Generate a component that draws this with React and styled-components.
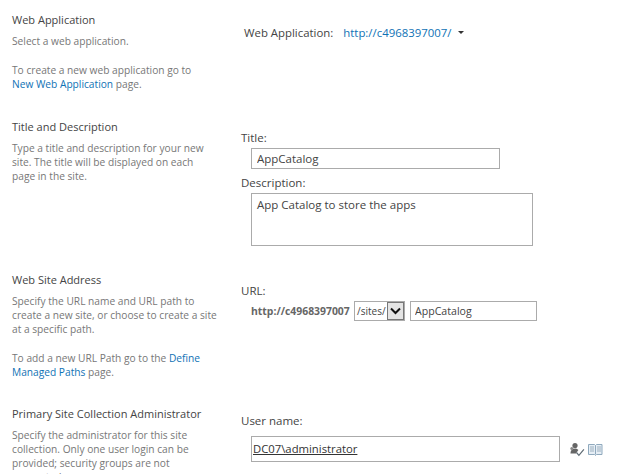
import styled, { createGlobalStyle } from 'styled-components'

const GlobalStyle = createGlobalStyle`
  html, body {
    margin: 0;
    height: 474px;
    overflow: hidden;
    background: #fff;
  }
  body {
    font-family: "Open Sans", "Noto Sans", "Liberation Sans", sans-serif;
  }
`
const Page = styled.div`
  width: 624px;
  height: 474px;
  overflow: hidden;
`
const Section = styled.section`
  display: grid;
  grid-template-columns: 241px 1fr;
  height: ${({ $height }) => $height}px;
`
const Info = styled.div`
  padding: ${({ $top }) => $top}px 0 0 12px;
  width: 205px;
`
const Heading = styled.h3`
  margin: 0 0 6px;
  font-size: 11px;
  line-height: 16px;
  font-weight: 400;
  color: #444;
`
const Desc = styled.p`
  margin: 0 0 15px;
  font-size: 10.2px;
  line-height: 14px;
  color: #777;
`
const Link = styled.a`
  color: #0f72b5;
  text-decoration: none;
`
const NoWrapLink = styled(Link)`
  display: inline-block;
  white-space: nowrap;
`
const Control = styled.div`
  padding-top: ${({ $top }) => $top}px;
  font-size: 11.5px;
  color: #444;
`
const WebAppRow = styled.div`
  display: flex;
  align-items: center;
  padding-left: 3px;
  height: 16px;
  font-size: 11.4px;
`
const WebAppLabel = styled.span`
  margin-right: 10px;
`
const Caret = styled.span`
  width: 0;
  height: 0;
  margin-left: 7px;
  border-left: 3px solid transparent;
  border-right: 3px solid transparent;
  border-top: 3px solid #333;
`
const Label = styled.div`
  line-height: 16px;
  height: ${({ $height }) => $height || 16}px;
  padding-top: ${({ $top }) => $top || 0}px;
`
const Field = styled.input`
  display: block;
  box-sizing: border-box;
  width: ${({ $width }) => $width}px;
  height: ${({ $height }) => $height || 21}px;
  margin-left: ${({ $indent }) => $indent ?? 10}px;
  padding: 0 ${({ $pad }) => $pad || 5}px;
  border: 1px solid #ababab;
  outline: none;
  background: #fff;
  font: inherit;
  font-size: ${({ $size }) => $size || 11.5}px;
  color: #444;
`
const Area = styled.textarea`
  display: block;
  box-sizing: border-box;
  width: 282px;
  height: 53px;
  margin-left: 10px;
  padding: 3px 5px;
  border: 1px solid #ababab;
  outline: none;
  resize: none;
  overflow: hidden;
  font: inherit;
  color: #444;
`
const UrlRow = styled.div`
  display: flex;
  align-items: center;
  margin-top: 2px;
  padding-left: 10px;
  height: 20px;
`
const Host = styled.b`
  width: 103px;
  font-size: 10.4px;
  font-weight: 700;
  color: #666;
`
const PathSelect = styled.div`
  display: flex;
  box-sizing: border-box;
  width: 51px;
  height: 20px;
  margin-right: 5px;
  border: 1px solid #ababab;
`
const PathText = styled.span`
  flex: 1;
  padding-left: 2px;
  line-height: 18px;
  font-size: 10px;
`
const PathButton = styled.span`
  display: flex;
  align-items: center;
  justify-content: center;
  box-sizing: border-box;
  width: 17px;
  background: #e4e4e4;
  border: 1px solid #777;
`
const PickerRow = styled.div`
  display: flex;
  align-items: center;
  gap: 10px;
  margin-left: 10px;
`
const Picker = styled.div`
  box-sizing: border-box;
  width: 309px;
  height: 26px;
  padding: 0 1px;
  border: 1px solid #ababab;
  font-size: 11.3px;
  line-height: 24px;
  color: #333;
  text-decoration: underline;
`
const Icons = styled.div`
  display: flex;
  align-items: center;
  gap: 3px;
`

function CheckNames() {
  return (
    <svg width="15" height="15" viewBox="0 0 15 15">
      <circle cx="5" cy="3.5" r="2.6" fill="#666" />
      <path d="M0.5 11c0-3 2-4.6 4.5-4.6 1.5 0 2.7.5 3.4 1.6L6 11.5H.5z" fill="#666" />
      <circle cx="1.8" cy="6.5" r="1.5" fill="#888" />
      <path d="M6.5 10.5l2.4 2.8 5-6" fill="none" stroke="#5f6b74" strokeWidth="1.2" />
    </svg>
  )
}

function AddressBook() {
  return (
    <svg width="15" height="13" viewBox="0 0 15 13">
      <path d="M.5 1.5h6l1 1 1-1h5.5v10H8.5l-1 1-1-1h-6z" fill="#e6eef5" stroke="#8fa9bd" />
      <path d="M7.5 2.5v9" stroke="#8fa9bd" />
      <path d="M2 4h4M2 6h4M2 8h4M9 4h4M9 6h4M9 8h4" stroke="#9db0bf" />
    </svg>
  )
}

export default function App() {
  return (
    <Page>
      <GlobalStyle />
      <Section $height={119}>
        <Info $top={12}>
          <Heading>Web Application</Heading>
          <Desc>Select a web application.</Desc>
          <Desc>To create a new web application go to <NoWrapLink>New Web Application</NoWrapLink> page.</Desc>
        </Info>
        <Control $top={24}>
          <WebAppRow>
            <WebAppLabel>Web Application:</WebAppLabel>
            <Link>http://c4968397007/</Link>
            <Caret />
          </WebAppRow>
        </Control>
      </Section>
      <Section $height={153}>
        <Info $top={0}>
          <Heading>Title and Description</Heading>
          <Desc>Type a title and description for your new site. The title will be displayed on each page in the site.</Desc>
        </Info>
        <Control $top={11}>
          <Label $height={18}>Title:</Label>
          <Field $width={249} defaultValue="AppCatalog" readOnly />
          <Label $height={18} $top={6}>Description:</Label>
          <Area defaultValue="App Catalog to store the apps" readOnly />
        </Control>
      </Section>
      <Section $height={134}>
        <Info $top={0}>
          <Heading>Web Site Address</Heading>
          <Desc>Specify the URL name and URL path to create a new site, or choose to create a site at a specific path.</Desc>
          <Desc>To add a new URL Path go to the <Link>Define Managed Paths</Link> page.</Desc>
        </Info>
        <Control $top={11}>
          <Label>URL:</Label>
          <UrlRow>
            <Host>http://c4968397007</Host>
            <PathSelect>
              <PathText>/sites/</PathText>
              <PathButton>
                <svg width="11" height="8" viewBox="0 0 11 8">
                  <path d="M1 1.5l4.5 4.5L10 1.5" fill="none" stroke="#111" strokeWidth="2" />
                </svg>
              </PathButton>
            </PathSelect>
            <Field $width={127} $height={20} $indent={0} $pad={4} $size={10.6} defaultValue="AppCatalog" readOnly />
          </UrlRow>
        </Control>
      </Section>
      <Section $height={68}>
        <Info $top={0}>
          <Heading>Primary Site Collection Administrator</Heading>
          <Desc>Specify the administrator for this site collection. Only one user login can be provided; security groups are not supported.</Desc>
        </Info>
        <Control $top={7}>
          <Label $height={23}>User name:</Label>
          <PickerRow>
            <Picker>DC07\administrator</Picker>
            <Icons>
              <CheckNames />
              <AddressBook />
            </Icons>
          </PickerRow>
        </Control>
      </Section>
    </Page>
  )
}
